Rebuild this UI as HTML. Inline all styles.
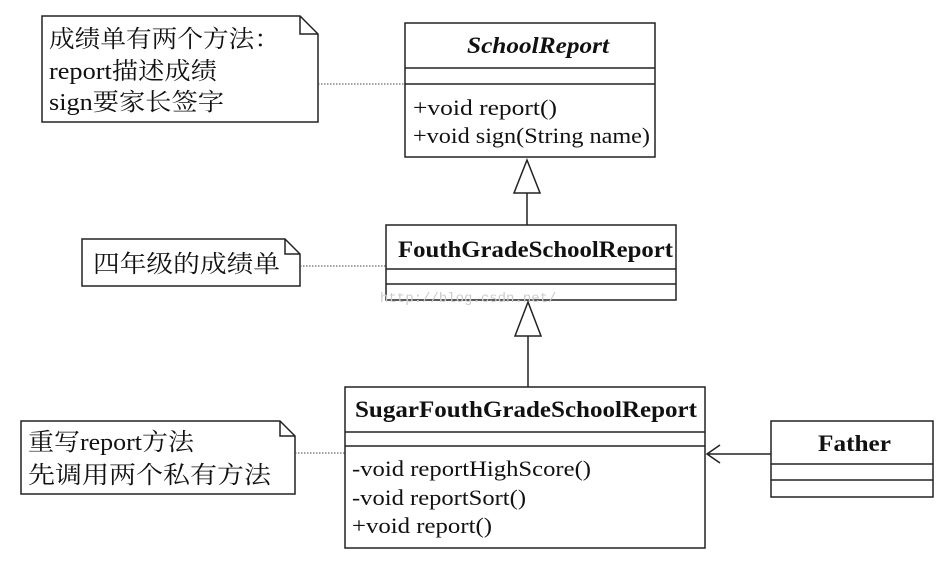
<!DOCTYPE html>
<html><head><meta charset="utf-8"><style>
html,body{margin:0;padding:0;background:#fff;}
svg{display:block}
text{font-family:"Liberation Serif","Noto Serif CJK SC",serif;fill:#111;}
.b{font-weight:bold;font-size:23px;}
.m{font-size:22px;}
.c{font-size:24px;}
</style></head><body>
<svg width="947" height="570" viewBox="0 0 947 570" xmlns="http://www.w3.org/2000/svg">
<g fill="none" stroke="#222" stroke-width="1.5">
<path d="M42 16 H300 L318 34 V122 H42 Z M300 16 V34 H318"/>
<rect x="405" y="23" width="250" height="134"/>
<line x1="405" y1="68" x2="655" y2="68"/><line x1="405" y1="84" x2="655" y2="84"/>
<path d="M527 160 L514 193 H540 Z M527 193 V225"/>
<rect x="386" y="225" width="290" height="75"/>
<line x1="386" y1="269" x2="676" y2="269"/><line x1="386" y1="284" x2="676" y2="284"/>
<path d="M82 239 H285 L300 254 V286 H82 Z M285 239 V254 H300"/>
<path d="M528 302 L515 336 H541 Z M528 336 V387"/>
<rect x="345" y="387" width="360" height="161"/>
<line x1="345" y1="432" x2="705" y2="432"/><line x1="345" y1="446" x2="705" y2="446"/>
<path d="M21 421 H280 L295 436 V494 H21 Z M280 421 V436 H295"/>
<rect x="771" y="421" width="162" height="76"/>
<line x1="771" y1="464" x2="933" y2="464"/><line x1="771" y1="480" x2="933" y2="480"/>
<path d="M771 454 H707 M720 445 L707 454 L720 463"/>
</g>
<g stroke="#444" stroke-width="1" stroke-dasharray="1.5 1.5" fill="none">
<line x1="318" y1="84" x2="405" y2="84"/>
<line x1="300" y1="266" x2="386" y2="266"/>
<line x1="295" y1="453" x2="345" y2="453"/>
</g>
<text x="49" y="47" class="c" textLength="231" lengthAdjust="spacingAndGlyphs">成绩单有两个方法：</text>
<text x="49" y="79" class="c" textLength="168" lengthAdjust="spacingAndGlyphs">report描述成绩</text>
<text x="49" y="110" class="c" textLength="175" lengthAdjust="spacingAndGlyphs">sign要家长签字</text>
<text x="467" y="53" class="b" font-style="italic" textLength="142" lengthAdjust="spacingAndGlyphs">SchoolReport</text>
<text x="413" y="115" class="m" textLength="144" lengthAdjust="spacingAndGlyphs">+void report()</text>
<text x="413" y="143" class="m" textLength="237" lengthAdjust="spacingAndGlyphs">+void sign(String name)</text>
<text x="398" y="257" class="b" textLength="275" lengthAdjust="spacingAndGlyphs">FouthGradeSchoolReport</text>
<text x="93" y="272" class="c" textLength="187" lengthAdjust="spacingAndGlyphs">四年级的成绩单</text>
<text x="380" y="302" style="font-family:'Liberation Mono',monospace;font-size:14px;fill:#ccc">http://blog.csdn.net/</text>
<text x="355" y="417" class="b" textLength="342" lengthAdjust="spacingAndGlyphs">SugarFouthGradeSchoolReport</text>
<text x="352" y="476" class="m" textLength="239" lengthAdjust="spacingAndGlyphs">-void reportHighScore()</text>
<text x="352" y="505" class="m" textLength="174" lengthAdjust="spacingAndGlyphs">-void reportSort()</text>
<text x="352" y="533" class="m" textLength="140" lengthAdjust="spacingAndGlyphs">+void report()</text>
<text x="28" y="450" class="c" textLength="166" lengthAdjust="spacingAndGlyphs">重写report方法</text>
<text x="28" y="483" class="c" textLength="243" lengthAdjust="spacingAndGlyphs">先调用两个私有方法</text>
<text x="818" y="451" class="b" textLength="73" lengthAdjust="spacingAndGlyphs">Father</text>
</svg>
</body></html>
